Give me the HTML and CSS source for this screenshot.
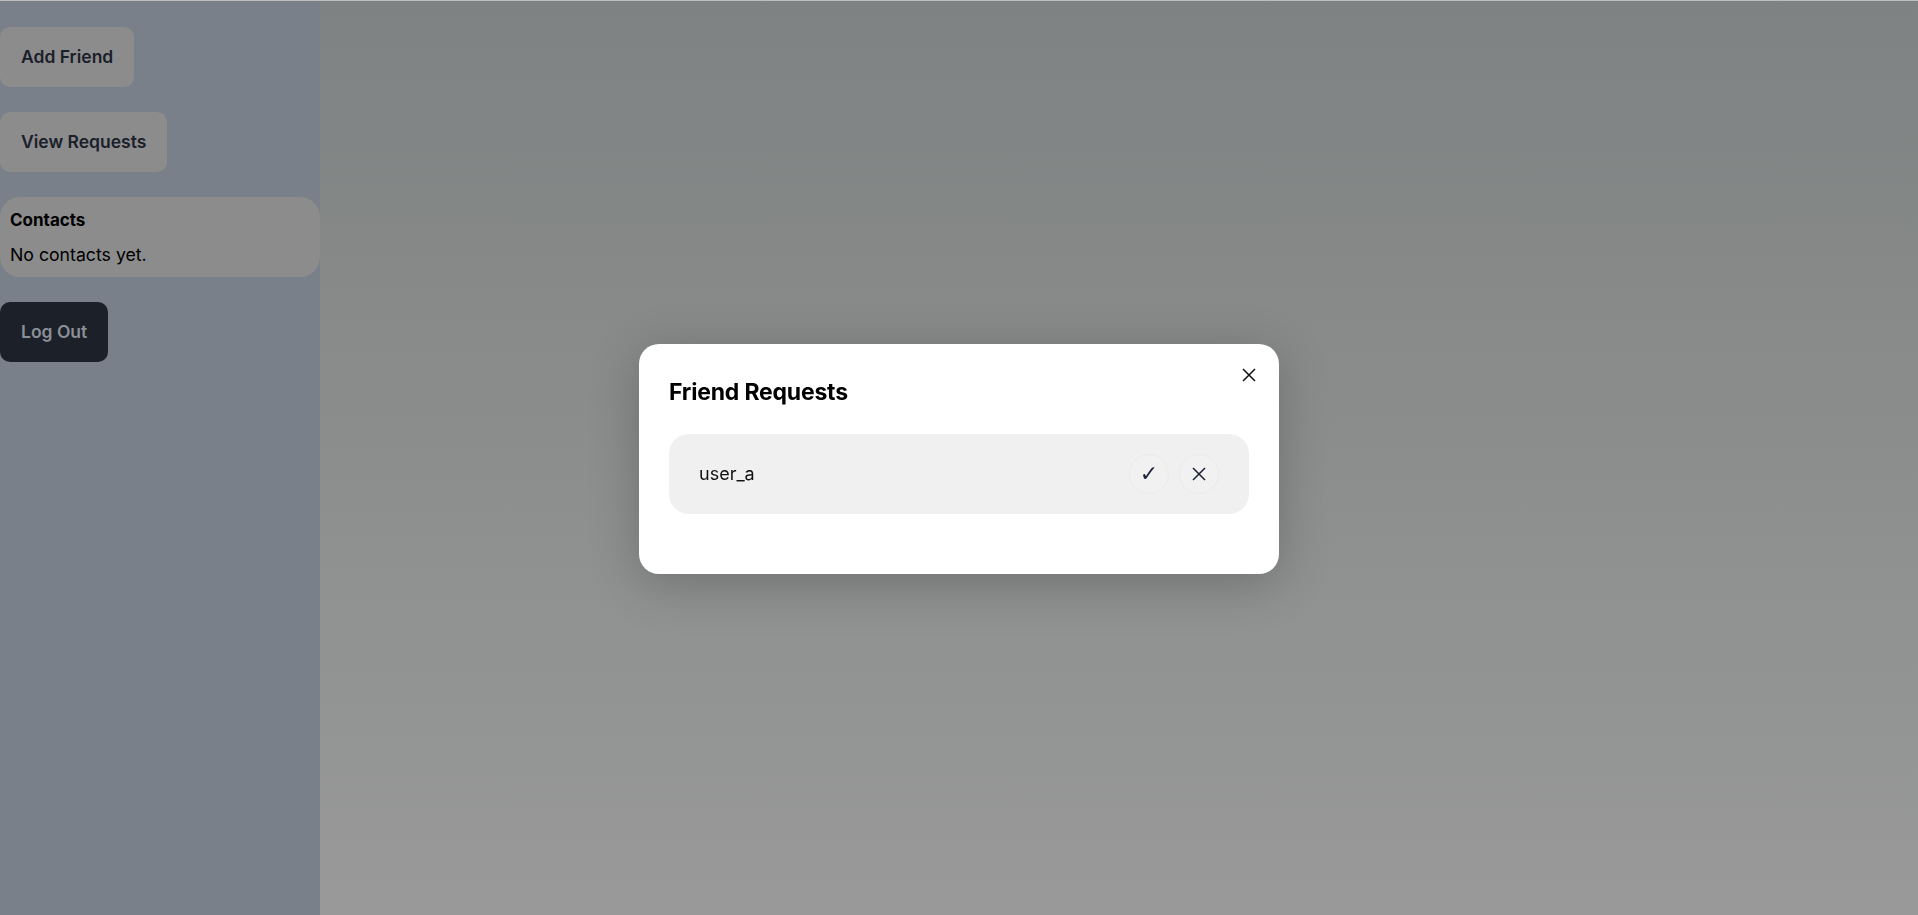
FILE: index.html
```html
<!DOCTYPE html>
<html lang="en">
<head>
<meta charset="utf-8">
<title>Friend Requests</title>
<link rel="stylesheet" href="styles.css">
</head>
<body>
<div class="app">
  <aside class="sidebar">
    <button class="btn btn-light">Add Friend</button>
    <button class="btn btn-light">View Requests</button>
    <section class="contacts">
      <h3 class="contacts-title">Contacts</h3>
      <p class="contacts-empty">No contacts yet.</p>
    </section>
    <button class="btn btn-dark">Log Out</button>
  </aside>
  <main class="main"></main>
</div>

<div class="overlay">
  <div class="modal">
    <button class="modal-close" aria-label="Close">
      <svg width="14" height="14" viewBox="0 0 14 14"><path d="M1 1L13 13M13 1L1 13" stroke="#111" stroke-width="1.5" fill="none"/></svg>
    </button>
    <h2 class="modal-title">Friend Requests</h2>
    <ul class="request-list">
      <li class="request">
        <span class="request-name">user_a</span>
        <div class="request-actions">
          <button class="circle-btn check" aria-label="Accept">✓</button>
          <button class="circle-btn" aria-label="Decline">
            <svg width="14" height="14" viewBox="0 0 14 14"><path d="M1 1L13 13M13 1L1 13" stroke="#1a2030" stroke-width="1.5" fill="none"/></svg>
          </button>
        </div>
      </li>
    </ul>
  </div>
</div>
</body>
</html>
```
FILE: styles.css
```css
* { box-sizing: border-box; }

html, body {
  margin: 0;
  height: 100%;
}

body {
  font-family: Inter, "Noto Sans", sans-serif;
  overflow: hidden;
}

.app {
  display: flex;
  height: 100vh;
  border-top: 1px solid #bdbdbd;
}

.sidebar {
  width: 320px;
  flex: none;
  background: #798089;
  display: flex;
  flex-direction: column;
  align-items: flex-start;
  gap: 25px;
  padding-top: 26px;
}

.main {
  flex: 1;
  background: linear-gradient(180deg, #7f8282 0%, #999999 100%);
}

.btn {
  font-family: inherit;
  font-size: 17.5px;
  font-weight: 600;
  line-height: 20px;
  border: none;
  border-radius: 10px;
  padding: 20px 21px;
  height: 60px;
  cursor: pointer;
}

.btn-light {
  background: #8c8c8c;
  color: #1a202b;
}

.btn-dark {
  background: #1c2028;
  color: #8a9099;
}

.contacts {
  width: 320px;
  height: 80px;
  background: #8c8c8c;
  border-radius: 20px;
  padding: 12px 10px 0;
}

.contacts-title {
  margin: 0 0 13px;
  font-size: 17px;
  font-weight: 700;
  line-height: 22px;
  color: #000;
}

.contacts-empty {
  margin: 0;
  font-size: 17.7px;
  line-height: 22px;
  color: #000;
}

.overlay {
  position: fixed;
  inset: 0;
  display: flex;
  align-items: center;
  justify-content: center;
  padding-top: 2px;
}

.modal {
  position: relative;
  width: 640px;
  background: #fff;
  border-radius: 20px;
  padding: 30px 30px 30px;
  box-shadow: 0 10px 50px rgba(0, 0, 0, 0.22);
}

.modal-close {
  position: absolute;
  top: 21px;
  right: 20px;
  width: 20px;
  height: 20px;
  padding: 3px;
  border: none;
  background: none;
  display: flex;
  align-items: center;
  justify-content: center;
  cursor: pointer;
}

.modal-title {
  margin: 0 0 24px;
  font-size: 23px;
  font-weight: 700;
  letter-spacing: -0.2px;
  line-height: 36px;
  color: #000;
}

.request-list {
  list-style: none;
  margin: 0 0 30px;
  padding: 0;
}

.request {
  height: 80px;
  background: #f0f0f0;
  border-radius: 20px;
  padding: 0 30px;
  display: flex;
  align-items: center;
  justify-content: space-between;
}

.request-name {
  font-size: 18px;
  color: #111;
}

.request-actions {
  display: flex;
  gap: 10px;
}

.circle-btn {
  width: 40px;
  height: 40px;
  border-radius: 50%;
  border: 1px solid #ebebeb;
  background: #f1f1f1;
  display: flex;
  align-items: center;
  justify-content: center;
  padding: 0;
  font-family: "DejaVu Sans", sans-serif;
  font-size: 22px;
  font-weight: 700;
  color: #1a2238;
  cursor: pointer;
}
```
